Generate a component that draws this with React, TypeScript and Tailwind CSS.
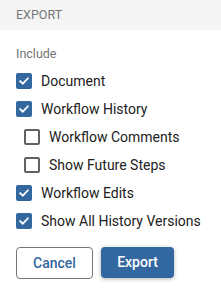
import React from "react";

function Box({ checked }: { checked: boolean }) {
  if (checked) {
    return (
      <span className="flex h-4 w-4 shrink-0 items-center justify-center rounded-[2px] bg-[#33679f]">
        <svg width="12" height="12" viewBox="0 0 12 12" fill="none">
          <path d="M2.2 6.2 L4.8 8.7 L9.8 3.4" stroke="#ffffff" strokeWidth="1.8" strokeLinecap="square" />
        </svg>
      </span>
    );
  }
  return <span className="block h-4 w-4 shrink-0 rounded-[2px] border-2 border-[#616161] bg-white" />;
}

const rows: { label: string; checked: boolean; indent?: boolean }[] = [
  { label: "Document", checked: true },
  { label: "Workflow History", checked: true },
  { label: "Workflow Comments", checked: false, indent: true },
  { label: "Show Future Steps", checked: false, indent: true },
  { label: "Workflow Edits", checked: true },
  { label: "Show All History Versions", checked: true },
];

export default function App() {
  return (
    <div className="w-[221px] h-[291px] bg-white font-['Roboto',sans-serif]">
      <div className="flex h-[30px] items-center bg-[#f5f5f5] px-4 text-[12.5px] text-[#757575]">EXPORT</div>
      <div className="px-4 pt-4">
        <div className="text-[12.5px] leading-4 text-[#757575]">Include</div>
        <div className="mt-[5px] flex flex-col">
          {rows.map((r) => (
            <div key={r.label} className={`flex h-7 items-center gap-[9px] ${r.indent ? "pl-2" : ""}`}>
              <Box checked={r.checked} />
              <span className="text-[14px] leading-5 text-[#212121]">{r.label}</span>
            </div>
          ))}
        </div>
        <div className="mt-3 flex gap-2">
          <button className="h-8 w-[77px] rounded border border-[#757575] bg-white text-[14px] font-medium text-[#33679f]">
            Cancel
          </button>
          <button className="h-[31px] w-[73px] rounded bg-[#33679f] text-[14px] font-medium text-white shadow-[0_1px_4px_rgba(0,0,0,0.3)]">
            Export
          </button>
        </div>
      </div>
    </div>
  );
}
